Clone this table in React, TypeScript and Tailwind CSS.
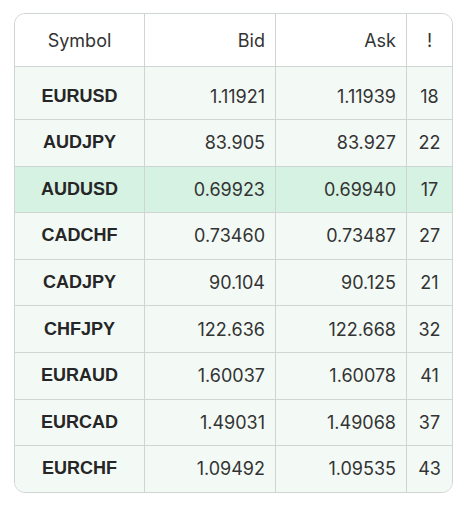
const rows = [
  { symbol: "EURUSD", bid: "1.11921", ask: "1.11939", spread: "18" },
  { symbol: "AUDJPY", bid: "83.905", ask: "83.927", spread: "22" },
  { symbol: "AUDUSD", bid: "0.69923", ask: "0.69940", spread: "17", active: true },
  { symbol: "CADCHF", bid: "0.73460", ask: "0.73487", spread: "27" },
  { symbol: "CADJPY", bid: "90.104", ask: "90.125", spread: "21" },
  { symbol: "CHFJPY", bid: "122.636", ask: "122.668", spread: "32" },
  { symbol: "EURAUD", bid: "1.60037", ask: "1.60078", spread: "41" },
  { symbol: "EURCAD", bid: "1.49031", ask: "1.49068", spread: "37" },
  { symbol: "EURCHF", bid: "1.09492", ask: "1.09535", spread: "43" },
];

export default function App() {
  return (
    <div className="min-h-screen bg-white pl-[14px] pt-[13px] font-['Inter',sans-serif] text-[#333]">
      <div className="w-[439px] overflow-hidden rounded-[11px] border border-[#cfd5d3]">
        <div className="grid h-[52px] grid-cols-[130px_131px_131px_1fr] bg-white text-[18px]">
          <div className="flex items-center justify-center border-r border-[#cfd5d3]">Symbol</div>
          <div className="flex items-center justify-end border-r border-[#cfd5d3] pr-[10px]">Bid</div>
          <div className="flex items-center justify-end border-r border-[#cfd5d3] pr-[10px]">Ask</div>
          <div className="flex items-center justify-center">!</div>
        </div>
        {rows.map((r, i) => {
          const pad = i === 0 ? "pt-[7px]" : "";
          return (
            <div
              key={r.symbol}
              className={`grid grid-cols-[130px_131px_131px_1fr] border-t border-[#cfd5d3] text-[18px] ${
                i === 0 ? "h-[53px]" : "h-[46.6px]"
              } ${r.active ? "bg-[#d6f2e3]" : "bg-[#f3faf6]"}`}
            >
              <div className={`flex items-center justify-center border-r border-[#cfd5d3] font-['Liberation_Sans',Arial,sans-serif] font-bold text-[#262626] ${pad}`}>
                {r.symbol}
              </div>
              <div className={`flex items-center justify-end border-r border-[#cfd5d3] pr-[10px] ${pad}`}>{r.bid}</div>
              <div className={`flex items-center justify-end border-r border-[#cfd5d3] pr-[10px] ${pad}`}>{r.ask}</div>
              <div className={`flex items-center justify-center ${pad}`}>{r.spread}</div>
            </div>
          );
        })}
      </div>
    </div>
  );
}
